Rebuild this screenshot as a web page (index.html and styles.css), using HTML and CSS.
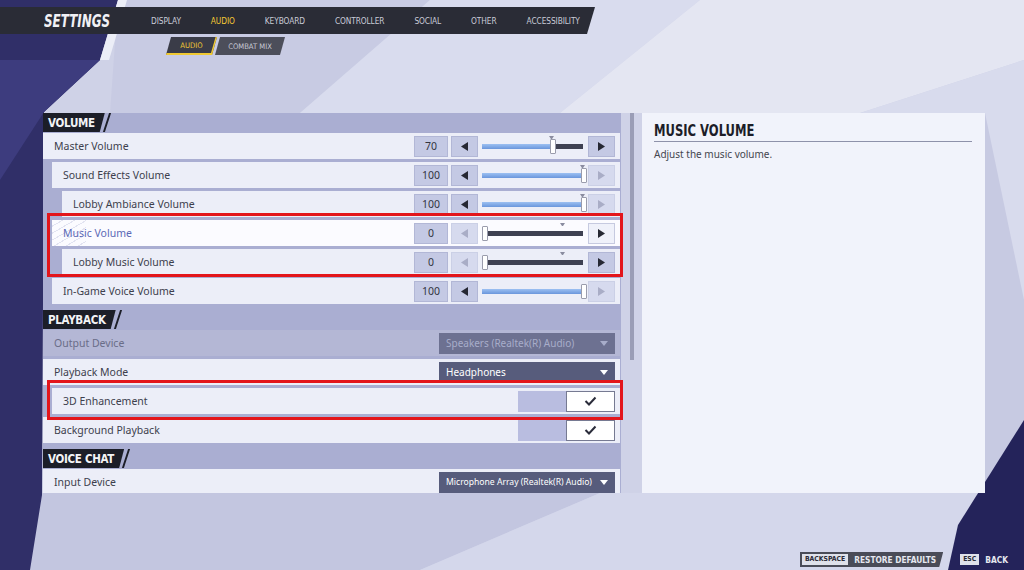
FILE: index.html
```html
<!DOCTYPE html>
<html>
<head>
<meta charset="utf-8">
<link rel="stylesheet" href="styles.css">
</head>
<body>
<div class="screen">
  <svg class="bg" viewBox="0 0 1024 570" width="1024" height="570">
    <rect width="1024" height="570" fill="#cfd2e7"/>
    <polygon points="118,0 430,0 300,113 110,113" fill="#c8cbe3"/>
    <polygon points="430,0 700,0 560,113 300,113" fill="#d9dcee"/>
    <polygon points="700,0 1024,0 1024,60 860,113 560,113" fill="#e4e6f2"/>
    <polygon points="860,113 1024,60 1024,300" fill="#d8dbed"/>
    <polygon points="985,113 1024,300 1024,430 985,492" fill="#c7cae2"/>
    <polygon points="0,493 600,493 420,570 0,570" fill="#c3c6e0"/>
    <polygon points="600,493 985,492 952,570 420,570" fill="#d4d7eb"/>
    <polygon points="1024,420 1024,570 948,570 958,525" fill="#24235a"/>
    <polygon points="0,0 118,0 100,60 44,112 42,495 30,570 0,570" fill="#302f68"/>
    <polygon points="0,60 100,60 44,112 0,180" fill="#3d3c7e"/>
    <polygon points="118,0 127,0 109,60 100,60" fill="#eceef7"/>
  </svg>

  <header class="topbar">
    <div class="title"><span class="squeeze">SETTINGS</span></div>
    <nav class="tabs">
      <span>DISPLAY</span>
      <span class="active">AUDIO</span>
      <span>KEYBOARD</span>
      <span>CONTROLLER</span>
      <span>SOCIAL</span>
      <span>OTHER</span>
      <span>ACCESSIBILITY</span>
    </nav>
  </header>

  <div class="subtabs">
    <span class="sub sub-active">AUDIO</span>
    <span class="sub">COMBAT MIX</span>
  </div>

  <main class="content">
    <section class="list">
      <div class="sec"><span class="tab">VOLUME</span><span class="slash"></span></div>

      <div class="row">
        <span class="label">Master Volume</span>
        <div class="controls">
          <span class="value">70</span>
          <span class="arrow"><svg width="7" height="9" viewBox="0 0 7 9"><polygon points="7,0 7,9 0,4.5"/></svg></span>
          <div class="slider"><div class="track"><div class="fill" style="width:70%"></div></div><span class="marker" style="left:70px"></span><span class="thumb" style="left:68px"></span></div>
          <span class="arrow"><svg width="7" height="9" viewBox="0 0 7 9"><polygon points="0,0 0,9 7,4.5"/></svg></span>
        </div>
      </div>

      <div class="row l1">
        <span class="label">Sound Effects Volume</span>
        <div class="controls">
          <span class="value">100</span>
          <span class="arrow"><svg width="7" height="9" viewBox="0 0 7 9"><polygon points="7,0 7,9 0,4.5"/></svg></span>
          <div class="slider"><div class="track"><div class="fill" style="width:100%"></div></div><span class="marker" style="left:101px"></span><span class="thumb" style="left:99px"></span></div>
          <span class="arrow off"><svg width="7" height="9" viewBox="0 0 7 9"><polygon points="0,0 0,9 7,4.5"/></svg></span>
        </div>
      </div>

      <div class="row l2">
        <span class="label">Lobby Ambiance Volume</span>
        <div class="controls">
          <span class="value">100</span>
          <span class="arrow"><svg width="7" height="9" viewBox="0 0 7 9"><polygon points="7,0 7,9 0,4.5"/></svg></span>
          <div class="slider"><div class="track"><div class="fill" style="width:100%"></div></div><span class="marker" style="left:101px"></span><span class="thumb" style="left:99px"></span></div>
          <span class="arrow off"><svg width="7" height="9" viewBox="0 0 7 9"><polygon points="0,0 0,9 7,4.5"/></svg></span>
        </div>
      </div>

      <div class="row l1 hover">
        <span class="label">Music Volume</span>
        <div class="controls">
          <span class="value">0</span>
          <span class="arrow off"><svg width="7" height="9" viewBox="0 0 7 9"><polygon points="7,0 7,9 0,4.5"/></svg></span>
          <div class="slider"><div class="track"><div class="fill" style="width:0%"></div></div><span class="marker" style="left:81px"></span><span class="thumb" style="left:0px"></span></div>
          <span class="arrow lit"><svg width="7" height="9" viewBox="0 0 7 9"><polygon points="0,0 0,9 7,4.5"/></svg></span>
        </div>
      </div>

      <div class="row l2">
        <span class="label">Lobby Music Volume</span>
        <div class="controls">
          <span class="value">0</span>
          <span class="arrow off"><svg width="7" height="9" viewBox="0 0 7 9"><polygon points="7,0 7,9 0,4.5"/></svg></span>
          <div class="slider"><div class="track"><div class="fill" style="width:0%"></div></div><span class="marker" style="left:81px"></span><span class="thumb" style="left:0px"></span></div>
          <span class="arrow"><svg width="7" height="9" viewBox="0 0 7 9"><polygon points="0,0 0,9 7,4.5"/></svg></span>
        </div>
      </div>

      <div class="row l1">
        <span class="label">In-Game Voice Volume</span>
        <div class="controls">
          <span class="value">100</span>
          <span class="arrow"><svg width="7" height="9" viewBox="0 0 7 9"><polygon points="7,0 7,9 0,4.5"/></svg></span>
          <div class="slider"><div class="track"><div class="fill" style="width:100%"></div></div><span class="thumb" style="left:99px"></span></div>
          <span class="arrow off"><svg width="7" height="9" viewBox="0 0 7 9"><polygon points="0,0 0,9 7,4.5"/></svg></span>
        </div>
      </div>

      <div class="sec"><span class="tab">PLAYBACK</span><span class="slash"></span></div>

      <div class="row disabled">
        <span class="label">Output Device</span>
        <div class="select select-off"><span>Speakers (Realtek(R) Audio)</span><span class="caret"></span></div>
      </div>

      <div class="row">
        <span class="label">Playback Mode</span>
        <div class="select"><span>Headphones</span><span class="caret"></span></div>
      </div>

      <div class="row l1">
        <span class="label">3D Enhancement</span>
        <div class="toggle"><span class="toggle-off"></span><span class="toggle-on"><svg width="13" height="10" viewBox="0 0 13 10"><path d="M1.5 5 L5 8.5 L11.5 1.5" fill="none" stroke="#2a2c3a" stroke-width="2"/></svg></span></div>
      </div>

      <div class="row">
        <span class="label">Background Playback</span>
        <div class="toggle"><span class="toggle-off"></span><span class="toggle-on"><svg width="13" height="10" viewBox="0 0 13 10"><path d="M1.5 5 L5 8.5 L11.5 1.5" fill="none" stroke="#2a2c3a" stroke-width="2"/></svg></span></div>
      </div>

      <div class="sec"><span class="tab">VOICE CHAT</span><span class="slash"></span></div>

      <div class="row">
        <span class="label">Input Device</span>
        <div class="select select-small"><span>Microphone Array (Realtek(R) Audio)</span><span class="caret"></span></div>
      </div>
    </section>

    <div class="scrollbar"><div class="scroll-thumb"></div></div>

    <aside class="info">
      <h2 class="info-title"><span class="squeeze">MUSIC VOLUME</span></h2>
      <p class="info-text">Adjust the music volume.</p>
    </aside>
  </main>

  <div class="highlight hl-volume"></div>
  <div class="highlight hl-3d"></div>

  <footer class="hints">
    <div class="hint hint-restore"><span class="key">BACKSPACE</span><span class="hint-text">RESTORE DEFAULTS</span></div>
    <div class="hint hint-back"><span class="key">ESC</span><span class="hint-text">BACK</span></div>
  </footer>
</div>
</body>
</html>
```

FILE: styles.css
```css
* { box-sizing: border-box; }

html, body {
  margin: 0;
  padding: 0;
}

body {
  width: 1024px;
  height: 570px;
  overflow: hidden;
  font-family: "Noto Sans", "Open Sans", sans-serif;
}

.screen {
  position: relative;
  width: 1024px;
  height: 570px;
  overflow: hidden;
  display: flex;
  flex-direction: column;
}

.bg {
  position: absolute;
  left: 0;
  top: 0;
  z-index: 0;
}

.topbar, .subtabs, .content, .hints {
  position: relative;
  z-index: 1;
}

.squeeze {
  display: inline-block;
  white-space: nowrap;
  transform: scaleX(0.78);
  transform-origin: left center;
}

/* ---------- top bar ---------- */
.topbar {
  margin-top: 7px;
  height: 27px;
  width: 595px;
  background: #2a2c36;
  clip-path: polygon(0 0, 100% 0, calc(100% - 8px) 100%, 0 100%);
  display: flex;
  align-items: center;
  padding-left: 44px;
}

.title {
  width: 62px;
  flex-shrink: 0;
  white-space: nowrap;
  font-family: "Liberation Sans Narrow", "DejaVu Sans Condensed", "Liberation Sans", sans-serif;
  font-stretch: condensed;
  font-weight: bold;
  font-style: italic;
  font-size: 17px;
  color: #f1f1f5;
  margin-right: 45px;
}

.tabs {
  display: flex;
  gap: 30px;
  font-family: "Liberation Sans Narrow", "DejaVu Sans Condensed", "Liberation Sans", sans-serif;
  font-stretch: condensed;
  font-size: 8.3px;
  letter-spacing: -0.1px;
  color: #c9cbd7;
  white-space: nowrap;
}

.tabs .active { color: #f3ca34; }

/* ---------- sub tabs ---------- */
.subtabs {
  margin: 3px 0 0 166px;
  display: flex;
  height: 18px;
}

.sub {
  display: flex;
  align-items: center;
  justify-content: center;
  font-family: "Liberation Sans Narrow", "DejaVu Sans Condensed", "Liberation Sans", sans-serif;
  font-stretch: condensed;
  font-size: 7.6px;
  color: #c8cad6;
  background: #4c4e5a;
  width: 70px;
  margin-left: -2px;
  clip-path: polygon(5px 0, 100% 0, calc(100% - 5px) 100%, 0 100%);
}

.sub-active {
  position: relative;
  width: 51px;
  margin-left: 0;
  color: #f0c932;
  background: #3a3c48;
  border-bottom: 2px solid #f0c932;
}

.sub-active::after {
  content: "";
  position: absolute;
  right: 2px;
  top: 0;
  width: 2px;
  height: 18px;
  background: #f0c932;
  transform: skewX(-16deg);
}

/* ---------- content ---------- */
.content {
  display: flex;
  margin-top: 58px;
  height: 380px;
}

.list {
  margin-left: 43px;
  width: 578px;
  background: #aaaed2;
  overflow: hidden;
  display: flex;
  flex-direction: column;
  flex-shrink: 0;
}

.sec {
  height: 19px;
  flex-shrink: 0;
  display: flex;
  align-items: stretch;
  margin-top: 6px;
}

.sec:first-child { margin-top: 0; }

.tab {
  display: flex;
  align-items: center;
  background: #1c1e28;
  color: #f3f3f6;
  font-family: "Liberation Sans Narrow", "DejaVu Sans Condensed", "Liberation Sans", sans-serif;
  font-stretch: condensed;
  font-weight: bold;
  font-size: 11.5px;
  letter-spacing: -0.3px;
  padding: 1px 10px 0 5px;
  clip-path: polygon(0 0, 100% 0, calc(100% - 5px) 100%, 0 100%);
}

.slash {
  width: 2px;
  margin-left: 1px;
  background: #1c1e28;
  transform: skewX(-18deg);
}

.row {
  height: 26px;
  flex-shrink: 0;
  margin: 3px 1px 0 0;
  background: #eceef8;
  display: flex;
  align-items: center;
  padding: 0 5px 0 11px;
  font-size: 10.5px;
  color: #3d3f4d;
}

.sec + .row { margin-top: 1px; }

.row.l1 { margin-left: 9px; }
.row.l2 { margin-left: 19px; }

.row.hover {
  background: #fbfbff repeating-linear-gradient(150deg, transparent 0 5px, rgba(150,156,200,0.25) 5px 6px) no-repeat 0 0 / 34px 26px;
}
.row.hover .label { color: #5b69b6; }

.row.disabled { background: #b4b7d5; }
.row.disabled .label { color: #6a6d88; }

.label { flex: 1; }

.controls {
  display: flex;
  align-items: center;
}

.value {
  width: 34px;
  height: 21px;
  display: flex;
  align-items: center;
  justify-content: center;
  background: #c4c9e4;
  border: 1px solid #b2b7d6;
  color: #33353f;
  font-size: 10.5px;
  margin-right: 3px;
}

.arrow {
  width: 27px;
  height: 21px;
  display: flex;
  align-items: center;
  justify-content: center;
  background: #c4c9e4;
  border: 1px solid #b2b7d6;
}

.arrow svg { fill: #262833; }
.arrow.off { background: #d6daee; border-color: #cbd0e6; }
.arrow.off svg { fill: #a9adc6; }
.arrow.lit { background: #eff1fa; border-color: #c6cae0; }

.slider {
  position: relative;
  width: 101px;
  height: 21px;
  margin: 0 5px 0 4px;
  display: flex;
  align-items: center;
}

.track {
  width: 100%;
  height: 5px;
  background: #3f4152;
}

.fill {
  height: 100%;
  background: linear-gradient(#9cc0f2, #6a96dc);
}

.thumb {
  position: absolute;
  top: 3px;
  width: 6px;
  height: 15px;
  background: #fff;
  border: 1px solid #9a9cac;
  border-radius: 1px;
}

.marker {
  position: absolute;
  top: 0;
  width: 5px;
  height: 3px;
  margin-left: -3px;
  border-left: 2.5px solid transparent;
  border-right: 2.5px solid transparent;
  border-top: 3px solid #8a8ca0;
}

.select {
  width: 176px;
  height: 21px;
  background: #575c7c;
  color: #fff;
  display: flex;
  align-items: center;
  justify-content: space-between;
  gap: 6px;
  padding: 0 7px 0 7px;
  font-size: 10px;
  white-space: nowrap;
}

.select-off { background: #6d7191; color: #a8adca; }
.select-off .caret { border-top-color: #a8adca; }
.select-small { font-size: 8.6px; }

.caret {
  flex-shrink: 0;
  width: 0;
  height: 0;
  border-left: 4px solid transparent;
  border-right: 4px solid transparent;
  border-top: 5px solid #fff;
}

.toggle {
  display: flex;
  width: 97px;
  height: 21px;
}

.toggle-off {
  width: 48px;
  background: #b9bde0;
}

.toggle-on {
  flex: 1;
  background: #fff;
  border: 1px solid #767a92;
  display: flex;
  align-items: center;
  justify-content: center;
}

/* ---------- scrollbar ---------- */
.scrollbar {
  width: 4px;
  margin-left: 9px;
  flex-shrink: 0;
}

.scroll-thumb {
  height: 247px;
  background: #9a9db6;
}

/* ---------- info panel ---------- */
.info {
  width: 343px;
  margin-left: 8px;
  flex-shrink: 0;
  background: #f1f3fb;
  padding: 8px 13px 0 12px;
}

.info-title {
  margin: 0;
  font-family: "Liberation Sans Narrow", "DejaVu Sans Condensed", "Liberation Sans", sans-serif;
  font-stretch: condensed;
  font-weight: bold;
  font-size: 16.5px;
  line-height: 19px;
  color: #1c1d28;
  padding-bottom: 1px;
  border-bottom: 1.5px solid #8e92aa;
}

.info-text {
  margin: 5px 0 0 0;
  font-size: 10px;
  color: #44464f;
}

/* ---------- highlights ---------- */
.highlight {
  position: absolute;
  z-index: 2;
  border: 3px solid #e3151b;
}

.hl-volume { left: 47px; top: 213px; width: 576px; height: 64px; }
.hl-3d { left: 47px; top: 380px; width: 576px; height: 40px; }

/* ---------- footer hints ---------- */
.hints {
  margin-top: auto;
  margin-bottom: 3px;
  display: flex;
  justify-content: flex-end;
  align-items: center;
  padding-right: 16px;
  height: 15px;
}

.hint {
  display: flex;
  align-items: center;
  height: 15px;
  font-family: "Liberation Sans Narrow", "DejaVu Sans Condensed", "Liberation Sans", sans-serif;
  font-stretch: condensed;
  font-weight: bold;
  white-space: nowrap;
}

.hint-restore {
  background: #4a4c58;
  padding: 0 7px 0 2px;
  clip-path: polygon(0 0, 100% 0, calc(100% - 4px) 100%, 0 100%);
}

.hint-back { margin-left: 17px; }

.key {
  background: #dfe1ea;
  color: #2a2a36;
  font-size: 6.8px;
  height: 11px;
  line-height: 11px;
  padding: 0 3px;
}

.hint-text {
  margin-left: 6px;
  font-size: 8.3px;
  color: #e6e8f0;
}
```
